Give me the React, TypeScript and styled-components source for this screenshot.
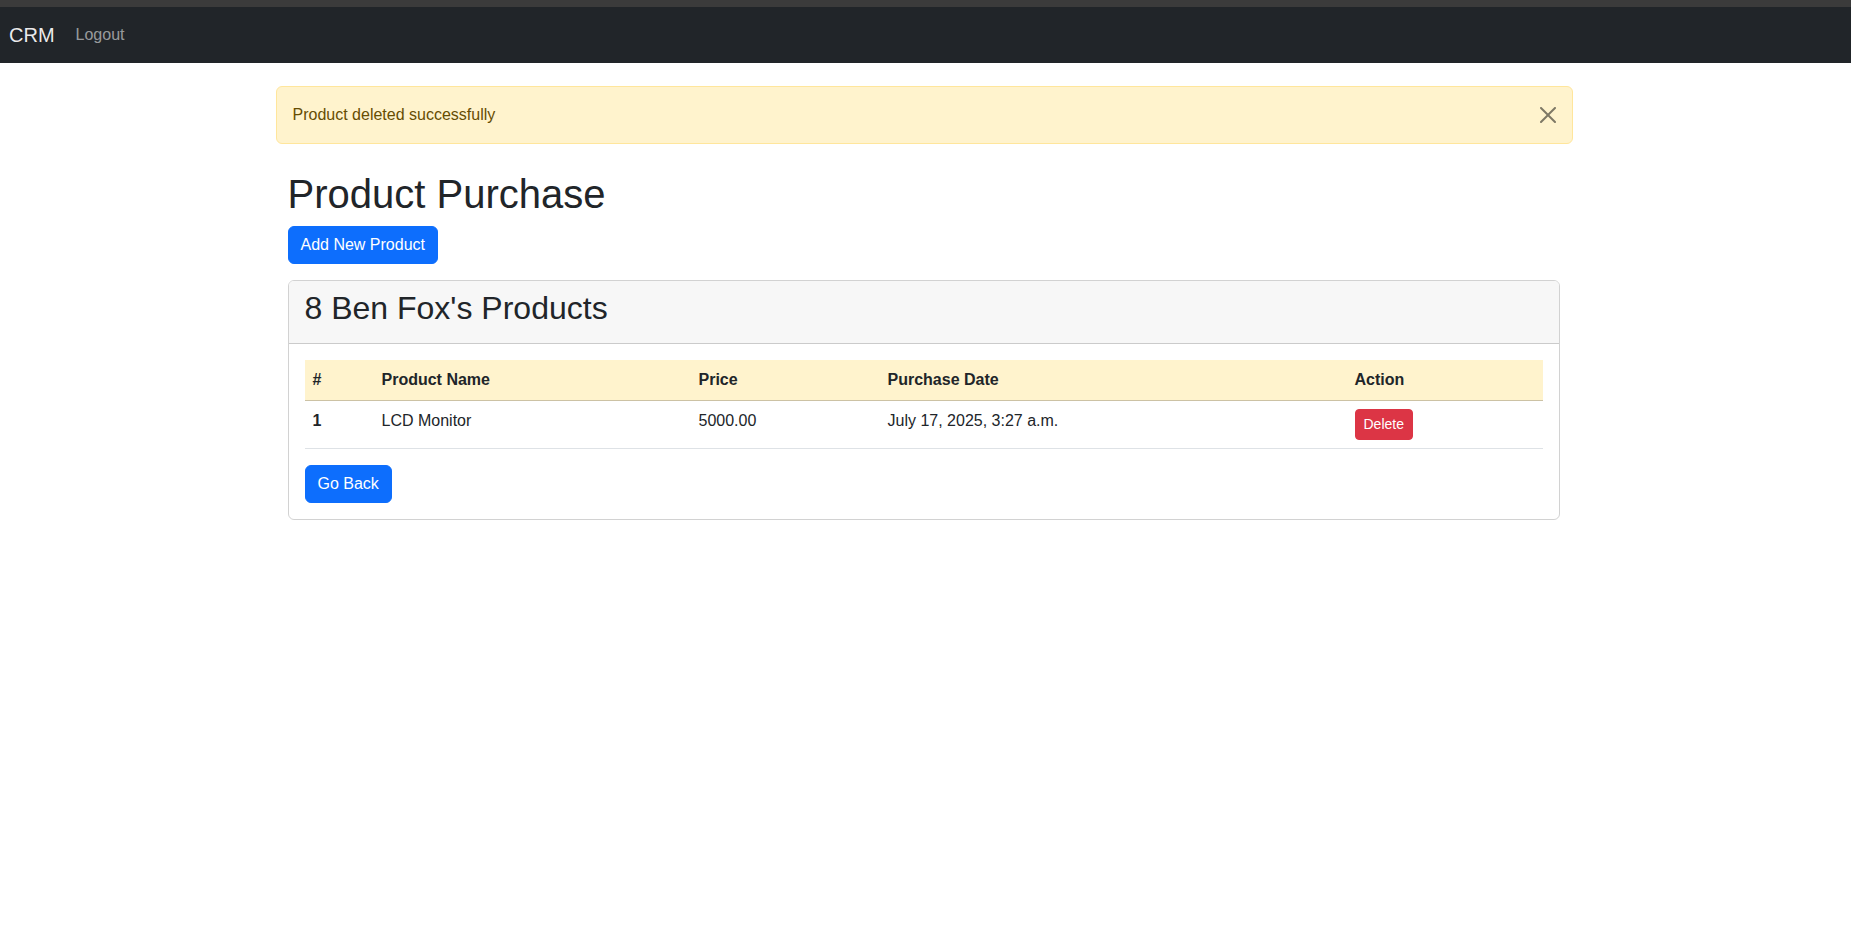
import React from 'react';
import styled, { createGlobalStyle } from 'styled-components';

const GlobalStyle = createGlobalStyle`
  html, body {
    margin: 0;
    padding: 0;
    background: #fff;
  }
  body {
    font-family: "Liberation Sans", Arial, sans-serif;
    font-size: 16px;
    line-height: 1.5;
    color: #212529;
  }
  * {
    box-sizing: border-box;
  }
`;

const TopStrip = styled.div`
  height: 7px;
  background-color: #3b3b3b;
`;

const Navbar = styled.nav`
  display: flex;
  align-items: center;
  height: 56px;
  padding: 0 9px;
  background-color: #212529;
`;

const Brand = styled.a`
  font-size: 20px;
  line-height: 30px;
  color: rgba(255, 255, 255, 0.92);
  text-decoration: none;
  margin-right: 13px;
`;

const NavLink = styled.a`
  padding: 8px;
  font-size: 16px;
  color: rgba(255, 255, 255, 0.55);
  text-decoration: none;
`;

const Container = styled.div`
  max-width: 1320px;
  margin: 0 auto;
  padding: 23px 13px 0 10px;
`;

const Inner = styled.div`
  padding: 0 13px 0 12px;
`;

const Alert = styled.div`
  display: flex;
  align-items: center;
  justify-content: space-between;
  padding: 16px;
  margin-bottom: 16px;
  background-color: #fff3cd;
  border: 1px solid #ffe69c;
  border-radius: 6px;
  color: #664d03;
`;

const CloseButton = styled.button`
  display: flex;
  width: 16px;
  height: 16px;
  padding: 0;
  border: 0;
  background: transparent;
  opacity: 0.5;
  cursor: pointer;
`;

const PageTitle = styled.h1`
  margin: 26px 0 8px;
  font-size: 40px;
  font-weight: 400;
  line-height: 1.2;
`;

const Button = styled.button<{ $variant?: 'primary' | 'danger'; $small?: boolean }>`
  display: inline-block;
  border: 1px solid ${p => (p.$variant === 'danger' ? '#dc3545' : '#0d6efd')};
  background-color: ${p => (p.$variant === 'danger' ? '#dc3545' : '#0d6efd')};
  color: #fff;
  font-family: inherit;
  font-size: ${p => (p.$small ? '14px' : '16px')};
  line-height: 1.5;
  padding: ${p => (p.$small ? '4px 8px' : '6px 12px')};
  border-radius: ${p => (p.$small ? '4px' : '6px')};
  cursor: pointer;
`;

const AddButton = styled(Button)`
  margin-bottom: 16px;
`;

const Card = styled.div`
  border: 1px solid rgba(0, 0, 0, 0.175);
  border-radius: 6px;
  overflow: hidden;
`;

const CardHeader = styled.div`
  padding: 8px 16px;
  background-color: #f7f7f7;
  border-bottom: 1px solid rgba(0, 0, 0, 0.175);
`;

const CardTitle = styled.h2`
  margin: 0 0 8px;
  font-size: 32px;
  font-weight: 400;
  line-height: 1.2;
`;

const CardBody = styled.div`
  padding: 16px;
`;

const Table = styled.table`
  width: 100%;
  margin-bottom: 16px;
  border-collapse: collapse;
  table-layout: fixed;
`;

const HeadCell = styled.th<{ $width: number }>`
  width: ${p => p.$width}px;
  padding: 8px;
  text-align: left;
  font-weight: 700;
  background-color: #fff3cd;
  border-bottom: 1px solid #ccc2a4;
`;

const Cell = styled.td<{ $bold?: boolean }>`
  padding: 8px;
  vertical-align: top;
  font-weight: ${p => (p.$bold ? 700 : 400)};
  border-bottom: 1px solid #dee2e6;
`;

const columns = [
  { label: '#', width: 69 },
  { label: 'Product Name', width: 317 },
  { label: 'Price', width: 189 },
  { label: 'Purchase Date', width: 467 },
  { label: 'Action', width: 196 },
];

const purchases = [{ id: 1, name: 'LCD Monitor', price: '5000.00', date: 'July 17, 2025, 3:27 a.m.' }];

const CloseIcon = () => (
  <svg width="16" height="16" viewBox="0 0 16 16" fill="#000">
    <path d="M.293.293a1 1 0 0 1 1.414 0L8 6.586 14.293.293a1 1 0 1 1 1.414 1.414L9.414 8l6.293 6.293a1 1 0 0 1-1.414 1.414L8 9.414l-6.293 6.293a1 1 0 0 1-1.414-1.414L6.586 8 .293 1.707a1 1 0 0 1 0-1.414z" />
  </svg>
);

export default function App() {
  const [showAlert, setShowAlert] = React.useState(true);

  return (
    <>
      <GlobalStyle />
      <TopStrip />
      <Navbar>
        <Brand href="#">CRM</Brand>
        <NavLink href="#">Logout</NavLink>
      </Navbar>
      <Container>
        {showAlert && (
          <Alert>
            <span>Product deleted successfully</span>
            <CloseButton aria-label="Close" onClick={() => setShowAlert(false)}>
              <CloseIcon />
            </CloseButton>
          </Alert>
        )}
        <Inner>
          <PageTitle>Product Purchase</PageTitle>
          <AddButton>Add New Product</AddButton>
          <Card>
            <CardHeader>
              <CardTitle>8 Ben Fox's Products</CardTitle>
            </CardHeader>
            <CardBody>
              <Table>
                <thead>
                  <tr>
                    {columns.map(c => (
                      <HeadCell key={c.label} $width={c.width}>
                        {c.label}
                      </HeadCell>
                    ))}
                  </tr>
                </thead>
                <tbody>
                  {purchases.map(p => (
                    <tr key={p.id}>
                      <Cell $bold>{p.id}</Cell>
                      <Cell>{p.name}</Cell>
                      <Cell>{p.price}</Cell>
                      <Cell>{p.date}</Cell>
                      <Cell>
                        <Button $variant="danger" $small>
                          Delete
                        </Button>
                      </Cell>
                    </tr>
                  ))}
                </tbody>
              </Table>
              <Button>Go Back</Button>
            </CardBody>
          </Card>
        </Inner>
      </Container>
    </>
  );
}
